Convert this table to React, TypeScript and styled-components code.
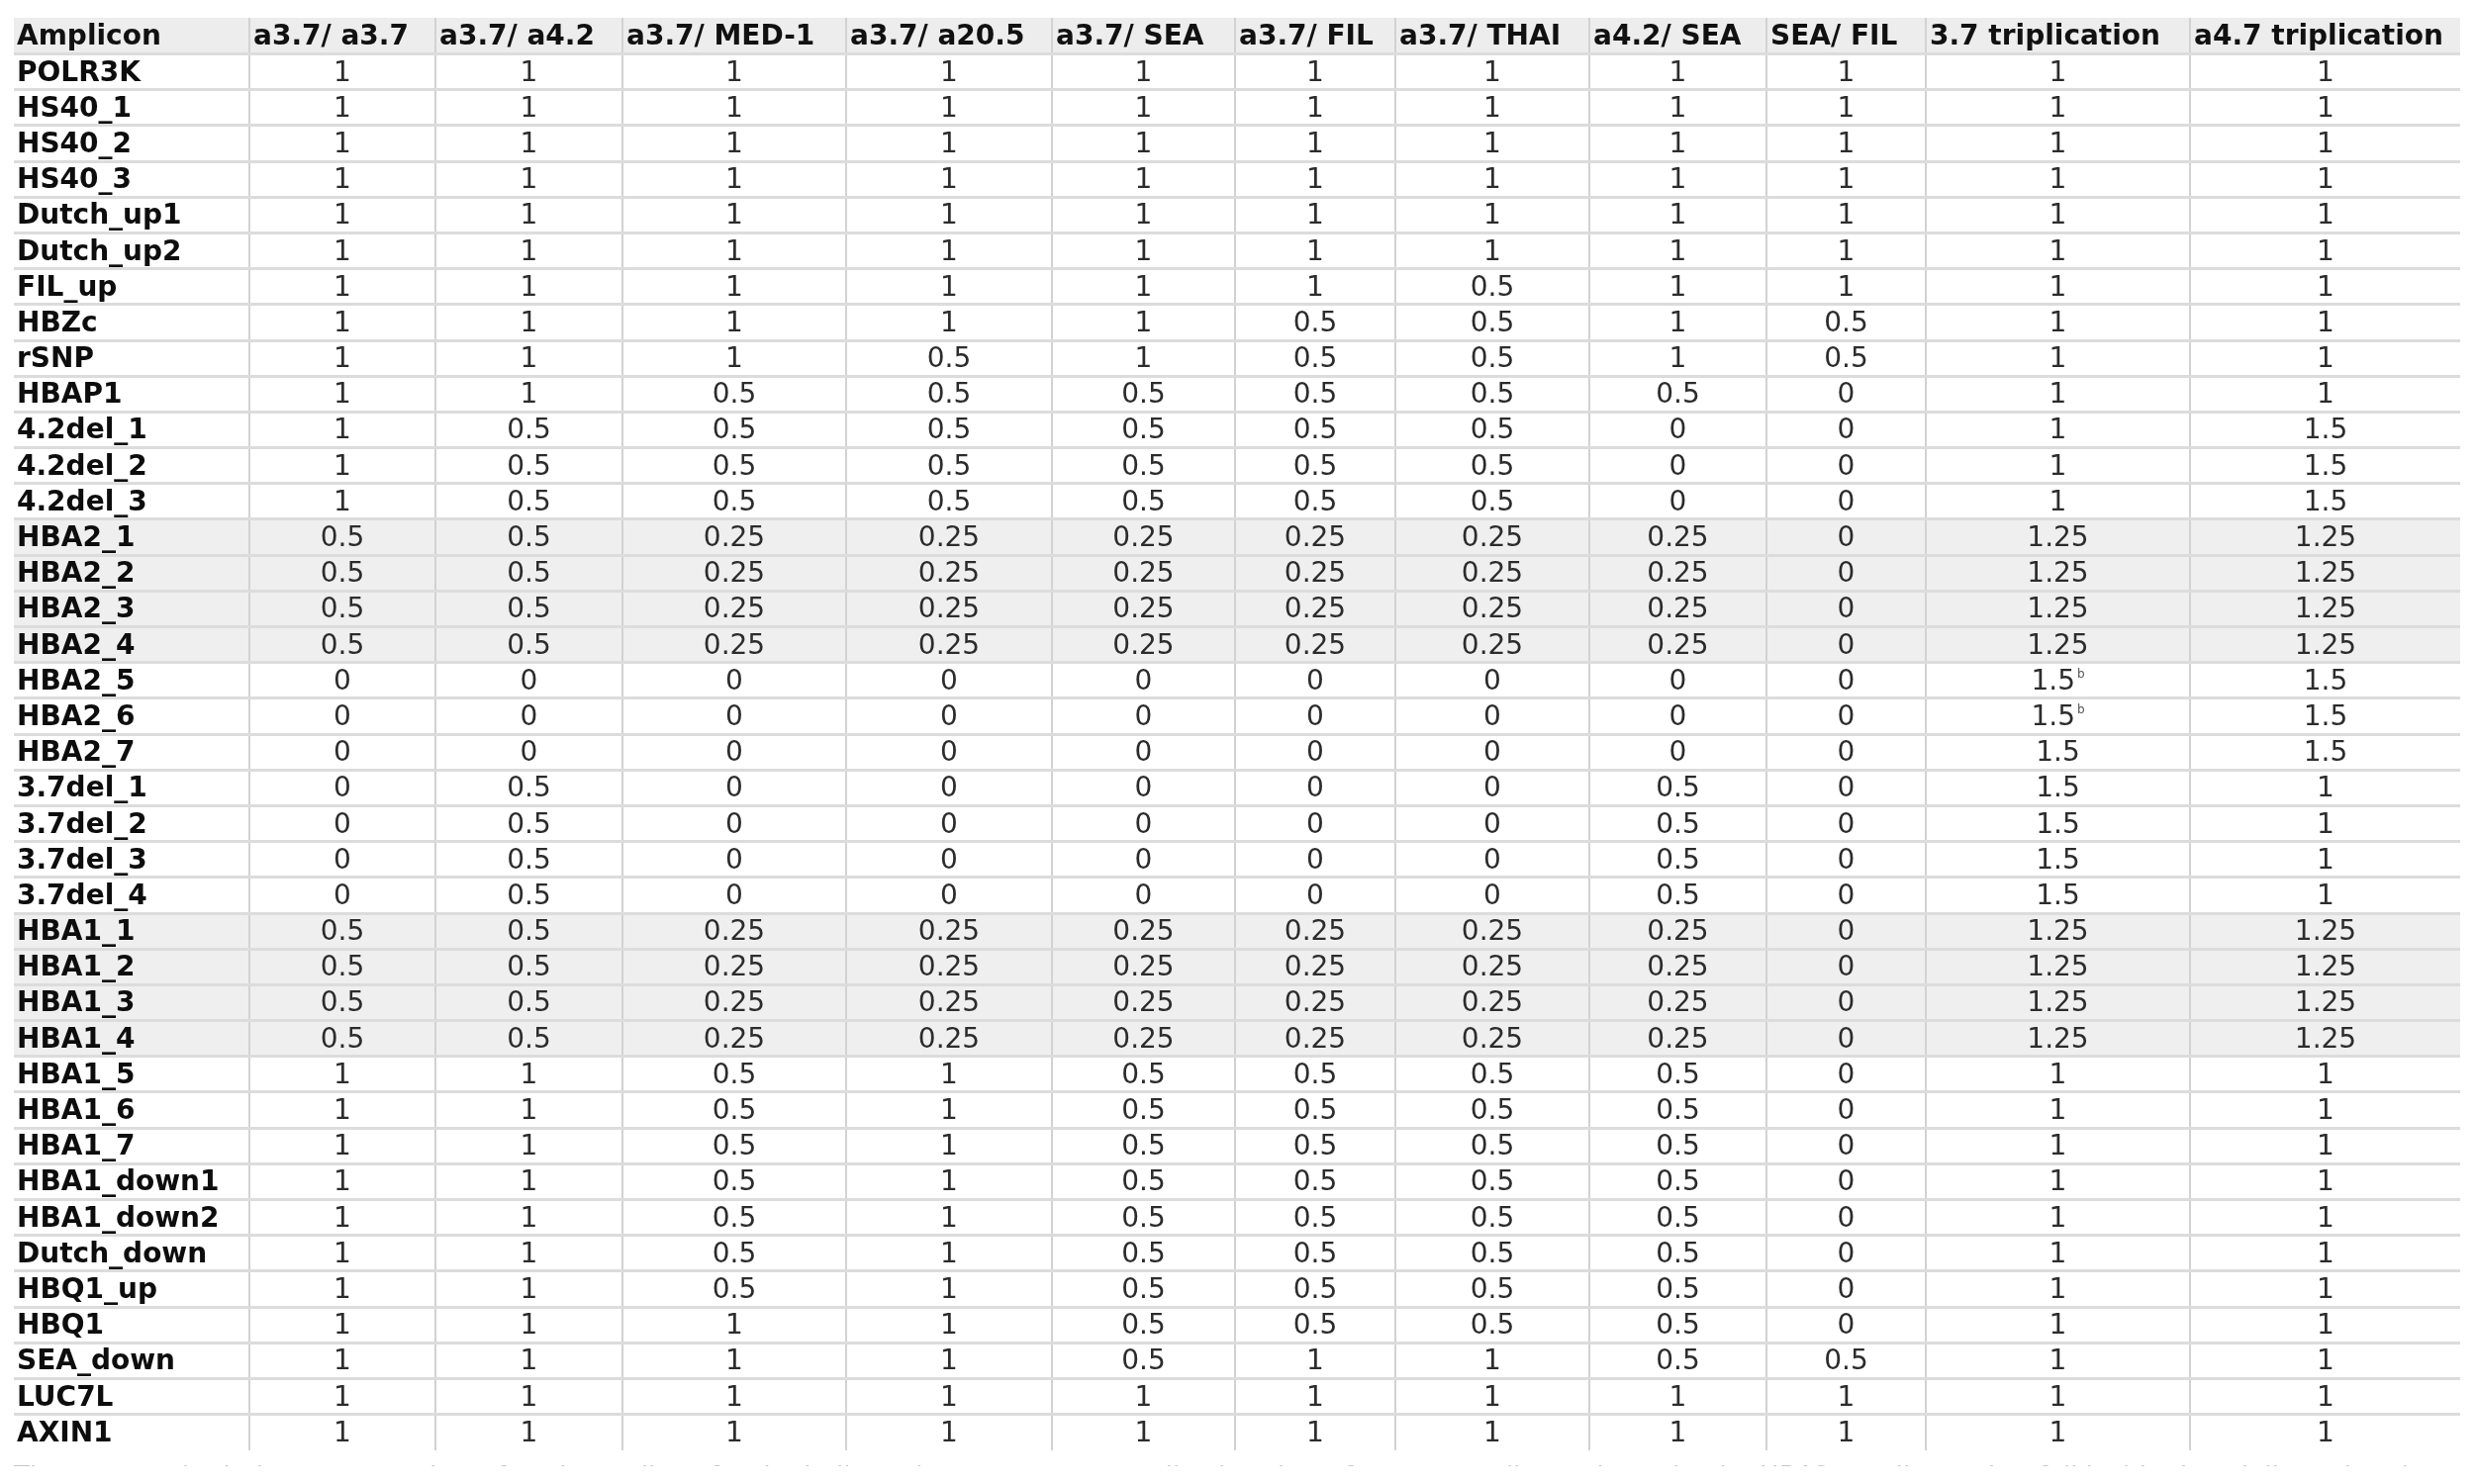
import styled, { createGlobalStyle } from 'styled-components'

const GlobalStyle = createGlobalStyle`
  html, body {
    margin: 0;
    padding: 0;
    background: #ffffff;
  }
`

const columns = [
  'a3.7/ a3.7',
  'a3.7/ a4.2',
  'a3.7/ MED-1',
  'a3.7/ a20.5',
  'a3.7/ SEA',
  'a3.7/ FIL',
  'a3.7/ THAI',
  'a4.2/ SEA',
  'SEA/ FIL',
  '3.7 triplication',
  'a4.7 triplication',
]

const widths = [238, 188, 189, 226, 208, 185, 162, 196, 179, 161, 267, 273]

type Row = { name: string; values: string[]; shaded?: boolean }

const ones = Array(11).fill('1')
const hba2 = ['0.5', '0.5', '0.25', '0.25', '0.25', '0.25', '0.25', '0.25', '0', '1.25', '1.25']
const del42 = ['1', '0.5', '0.5', '0.5', '0.5', '0.5', '0.5', '0', '0', '1', '1.5']
const del37 = ['0', '0.5', '0', '0', '0', '0', '0', '0.5', '0', '1.5', '1']
const hba1 = ['1', '1', '0.5', '1', '0.5', '0.5', '0.5', '0.5', '0', '1', '1']
const zeros = (last: string) => ['0', '0', '0', '0', '0', '0', '0', '0', '0', last, '1.5']

const rows: Row[] = [
  { name: 'POLR3K', values: ones },
  { name: 'HS40_1', values: ones },
  { name: 'HS40_2', values: ones },
  { name: 'HS40_3', values: ones },
  { name: 'Dutch_up1', values: ones },
  { name: 'Dutch_up2', values: ones },
  { name: 'FIL_up', values: ['1', '1', '1', '1', '1', '1', '0.5', '1', '1', '1', '1'] },
  { name: 'HBZc', values: ['1', '1', '1', '1', '1', '0.5', '0.5', '1', '0.5', '1', '1'] },
  { name: 'rSNP', values: ['1', '1', '1', '0.5', '1', '0.5', '0.5', '1', '0.5', '1', '1'] },
  { name: 'HBAP1', values: ['1', '1', '0.5', '0.5', '0.5', '0.5', '0.5', '0.5', '0', '1', '1'] },
  { name: '4.2del_1', values: del42 },
  { name: '4.2del_2', values: del42 },
  { name: '4.2del_3', values: del42 },
  { name: 'HBA2_1', values: hba2, shaded: true },
  { name: 'HBA2_2', values: hba2, shaded: true },
  { name: 'HBA2_3', values: hba2, shaded: true },
  { name: 'HBA2_4', values: hba2, shaded: true },
  { name: 'HBA2_5', values: zeros('1.5b') },
  { name: 'HBA2_6', values: zeros('1.5b') },
  { name: 'HBA2_7', values: zeros('1.5') },
  { name: '3.7del_1', values: del37 },
  { name: '3.7del_2', values: del37 },
  { name: '3.7del_3', values: del37 },
  { name: '3.7del_4', values: del37 },
  { name: 'HBA1_1', values: hba2, shaded: true },
  { name: 'HBA1_2', values: hba2, shaded: true },
  { name: 'HBA1_3', values: hba2, shaded: true },
  { name: 'HBA1_4', values: hba2, shaded: true },
  { name: 'HBA1_5', values: hba1 },
  { name: 'HBA1_6', values: hba1 },
  { name: 'HBA1_7', values: hba1 },
  { name: 'HBA1_down1', values: hba1 },
  { name: 'HBA1_down2', values: hba1 },
  { name: 'Dutch_down', values: hba1 },
  { name: 'HBQ1_up', values: hba1 },
  { name: 'HBQ1', values: ['1', '1', '1', '1', '0.5', '0.5', '0.5', '0.5', '0', '1', '1'] },
  { name: 'SEA_down', values: ['1', '1', '1', '1', '0.5', '1', '1', '0.5', '0.5', '1', '1'] },
  { name: 'LUC7L', values: ones },
  { name: 'AXIN1', values: ones },
]

export default function App() {
  return (
    <Page>
      <GlobalStyle />
      <Table>
        <colgroup>
          {widths.map((w, i) => (
            <col key={i} style={{ width: w }} />
          ))}
        </colgroup>
        <thead>
          <tr>
            <HeadCell>Amplicon</HeadCell>
            {columns.map((c) => (
              <HeadCell key={c}>{c}</HeadCell>
            ))}
          </tr>
        </thead>
        <tbody>
          {rows.map((r) => (
            <BodyRow key={r.name} $shaded={r.shaded}>
              <NameCell scope="row">{r.name}</NameCell>
              {r.values.map((v, i) => (
                <ValueCell key={i}>
                  {v.endsWith('b') ? (
                    <>
                      {v.slice(0, -1)}
                      <Note>b</Note>
                    </>
                  ) : (
                    v
                  )}
                </ValueCell>
              ))}
            </BodyRow>
          ))}
        </tbody>
      </Table>
      {/* only the tops of the next caption line show in the screenshot */}
      <Caption>
        <CaptionText>
          The expected relative copy number of each amplicon for the indicated genotypes, normalised to the reference
          amplicons; b marks the HBA2 amplicons that fall inside the triplicated region.
        </CaptionText>
      </Caption>
    </Page>
  )
}

const Page = styled.div`
  width: 2472px;
  padding: 18px 0 0 14px;
  filter: blur(0.7px);
`

const Table = styled.table`
  border-collapse: collapse;
  table-layout: fixed;
  width: 2472px;
  font-family: 'DejaVu Sans', 'Liberation Sans', sans-serif;
  font-size: 28px;
`

const HeadCell = styled.th`
  height: 35px;
  padding: 0 0 0 3px;
  background: #ededed;
  color: #111111;
  font-weight: bold;
  text-align: left;
  white-space: nowrap;
  overflow: hidden;
  line-height: 1;
  border-bottom: 3px solid #dcdcdc;

  & + & {
    border-left: 2px solid #d2d2d2;
  }
`

const BodyRow = styled.tr<{ $shaded?: boolean }>`
  height: 36.2px;
  background: ${({ $shaded }) => ($shaded ? '#efefef' : '#ffffff')};

  & > * {
    border-bottom: 3px solid #dcdcdc;
  }

  &:last-child > * {
    border-bottom: none;
  }
`

const NameCell = styled.th`
  padding: 0 0 0 3px;
  color: #0d0d0d;
  font-weight: bold;
  text-align: left;
  white-space: nowrap;
  line-height: 1;
`

const ValueCell = styled.td`
  padding: 0;
  color: #2c2c2c;
  text-align: center;
  white-space: nowrap;
  line-height: 1;
  border-left: 2px solid #d2d2d2;
`

const Note = styled.sup`
  font-size: 12px;
  vertical-align: 12px;
  margin-left: 2px;
  color: #555555;
`

const Caption = styled.div`
  margin-top: 14px;
  height: 2px;
  overflow: hidden;
`

const CaptionText = styled.div`
  font-family: 'DejaVu Sans', sans-serif;
  font-size: 26px;
  line-height: 26px;
  margin-top: -1px;
  color: #c6c6c6;
  white-space: nowrap;
`
